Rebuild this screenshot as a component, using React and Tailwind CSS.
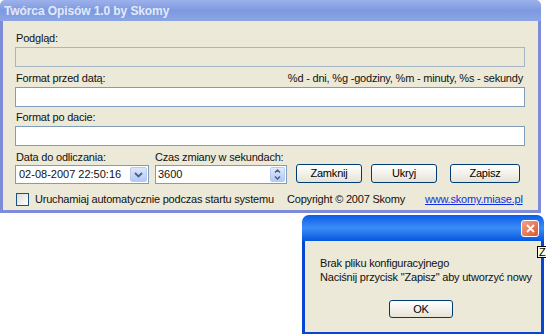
import React from 'react';

function XpButton({ children, className = '' }) {
  return (
    <div
      className={`flex items-center justify-center rounded-[3px] border border-[#003C74] bg-gradient-to-b from-white to-[#E6E3D6] text-[11px] text-black ${className}`}
    >
      {children}
    </div>
  );
}

function MainWindow() {
  return (
    <div className="flex h-[213px] w-[541px] flex-col">
      {/* TITLE BAR (inactive) */}
      <div className="flex h-[21px] items-center rounded-t-[5px] bg-gradient-to-b from-[#9DB2EC] via-[#7E99E0] to-[#8CA5E6] pl-[4px]">
        <span className="text-[12px] font-bold tracking-[-0.1px] text-[#E2EAFA]">
          Twórca Opisów 1.0 by Skomy
        </span>
      </div>

      {/* CLIENT */}
      <div className="flex flex-1 flex-col border-x-[3px] border-b-[3px] border-[#7D8BD9] bg-[#ECE9D8] px-[12px] text-[11px] tracking-[-0.2px] text-[#111]">
        <div className="mt-[11px] h-[13px] leading-[13px] pl-[1px]">Podgląd:</div>
        <div className="mt-[2px] h-[20px] w-[510px] border border-[#A5B6C6] bg-[#ECE9D8]" />

        <div className="mt-[5px] flex h-[13px] w-[508px] justify-between leading-[13px] pl-[1px]">
          <span>Format przed datą:</span>
          <span>%d - dni, %g -godziny, %m - minuty, %s - sekundy</span>
        </div>
        <div className="mt-[2px] h-[20px] w-[510px] border border-[#7F9DB9] bg-white" />

        <div className="mt-[4px] h-[13px] leading-[13px] pl-[1px]">Format po dacie:</div>
        <div className="mt-[2px] h-[20px] w-[510px] border border-[#7F9DB9] bg-white" />

        <div className="mt-[5px] flex h-[13px] leading-[13px]">
          <span className="w-[140px] pl-[1px]">Data do odliczania:</span>
          <span>Czas zmiany w sekundach:</span>
        </div>

        <div className="mt-[1px] flex items-start">
          {/* date picker */}
          <div className="flex h-[19px] w-[134px] items-center border border-[#7F9DB9] bg-white pl-[3px]">
            <span className="flex-1 text-[11px] tracking-[0px]">02-08-2007 22:50:16</span>
            <div className="mr-[1px] flex h-[15px] w-[17px] items-center justify-center rounded-[2px] border border-[#B9CBF3] bg-gradient-to-b from-[#DCE6FC] to-[#B4C9F6]">
              <svg width="9" height="6" viewBox="0 0 9 6">
                <path d="M1 1 L4.5 4.5 L8 1" fill="none" stroke="#4D6185" strokeWidth="1.8" />
              </svg>
            </div>
          </div>

          {/* spin box */}
          <div className="ml-[6px] flex h-[19px] w-[132px] items-center border border-[#7F9DB9] bg-white pl-[2px]">
            <span className="flex-1 text-[11px] tracking-[0px]">3600</span>
            <div className="mr-[1px] flex h-[15px] w-[15px] flex-col overflow-hidden rounded-[2px] border border-[#B9CBF3]">
              <div className="flex flex-1 items-center justify-center bg-gradient-to-b from-[#E2EAFD] to-[#C6D6F8]">
                <svg width="7" height="4" viewBox="0 0 7 4">
                  <path d="M1 3.5 L3.5 1 L6 3.5" fill="none" stroke="#4D6185" strokeWidth="1.5" />
                </svg>
              </div>
              <div className="flex flex-1 items-center justify-center bg-gradient-to-b from-[#C6D6F8] to-[#B4C9F6]">
                <svg width="7" height="4" viewBox="0 0 7 4">
                  <path d="M1 0.5 L3.5 3 L6 0.5" fill="none" stroke="#4D6185" strokeWidth="1.5" />
                </svg>
              </div>
            </div>
          </div>

          <div className="-mt-[1px] ml-[9px] flex gap-[9px]">
            <XpButton className="h-[19px] w-[66px]">Zamknij</XpButton>
            <XpButton className="h-[19px] w-[66px]">Ukryj</XpButton>
            <XpButton className="ml-[4px] h-[19px] w-[70px]">Zapisz</XpButton>
          </div>
        </div>

        <div className="mt-[9px] flex h-[13px] items-center">
          <div className="ml-[1px] h-[13px] w-[13px] shrink-0 border border-[#1C5180] bg-gradient-to-br from-[#DCDCD7] to-white" />
          <span className="ml-[6px] w-[252px] shrink-0">Uruchamiaj automatycznie podczas startu systemu</span>
          <span className="w-[138px] shrink-0">Copyright © 2007 Skomy</span>
          <span className="text-[#1030E0] underline">www.skomy.miase.pl</span>
        </div>
      </div>
    </div>
  );
}

function MessageBox() {
  return (
    <div className="absolute left-[302px] top-[215px] flex h-[120px] w-[242px] flex-col">
      <div className="flex h-[26px] items-start justify-end rounded-t-[7px] bg-gradient-to-b from-[#0A5BE8] via-[#3B8CF6] to-[#0556E0] pr-[5px] pt-[5px]">
        <div className="flex h-[17px] w-[18px] items-center justify-center rounded-[3px] border border-white bg-gradient-to-br from-[#F0A28B] to-[#D9542E]">
          <svg width="9" height="9" viewBox="0 0 9 9">
            <path d="M1 1 L8 8 M8 1 L1 8" stroke="white" strokeWidth="1.8" />
          </svg>
        </div>
      </div>
      <div className="flex flex-1 flex-col border-x-[3px] border-b-[3px] border-[#0745D5] bg-[#ECE9D8] text-[11px] tracking-[-0.2px] text-[#111]">
        <div className="mt-[15px] pl-[15px] leading-[14px]">
          <div>Brak pliku konfiguracyjnego</div>
          <div>Naciśnij przycisk "Zapisz" aby utworzyć nowy</div>
        </div>
        <div className="mt-[16px] flex justify-center pr-[4px]">
          <XpButton className="h-[18px] w-[64px]">OK</XpButton>
        </div>
      </div>
    </div>
  );
}

export default function App() {
  return (
    <div className="relative h-[334px] w-[546px] overflow-hidden bg-white font-['Liberation_Sans',sans-serif]">
      <MainWindow />
      <MessageBox />
      <div className="absolute left-[537px] top-[246px] h-[12px] border border-black bg-[#FFFFE1] pl-[1px] text-[11px] leading-[10px] text-black">
        Za
      </div>
    </div>
  );
}
